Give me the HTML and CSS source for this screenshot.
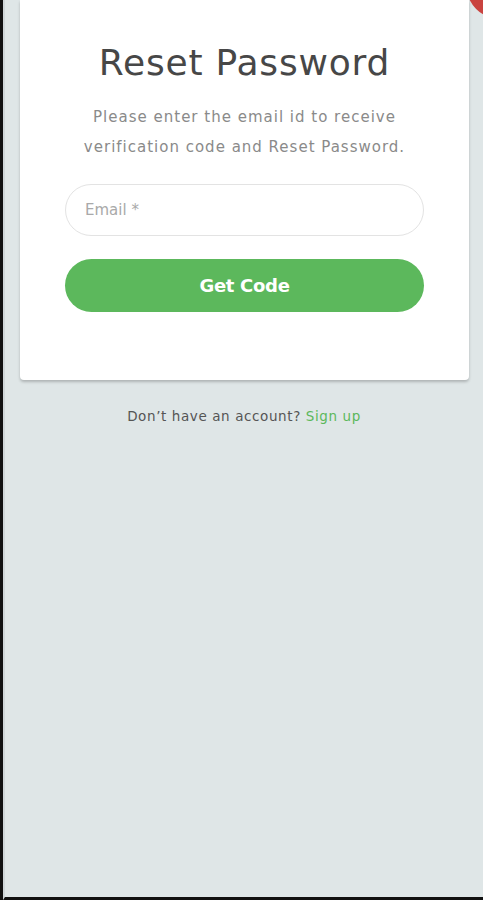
FILE: index.html
```html
<!DOCTYPE html>
<html>
<head>
<meta charset="utf-8">
<link rel="stylesheet" href="styles.css">
</head>
<body>
<div class="frame">
  <div class="corner"></div>
  <div class="card">
    <h1 class="title">Reset Password</h1>
    <p class="desc">Please enter the email id to receive<br>verification code and Reset Password.</p>
    <div class="field">Email *</div>
    <button class="btn">Get Code</button>
  </div>
  <p class="signup">Don’t have an account? <span class="link">Sign up</span></p>
</div>
</body>
</html>
```
FILE: styles.css
```css
html, body {
  margin: 0;
  padding: 0;
  height: 100%;
  overflow: hidden;
}
body {
  background: #111;
  font-family: "DejaVu Sans", sans-serif;
}
.frame {
  position: relative;
  box-sizing: border-box;
  height: 900px;
  margin-left: 3px;
  border-left: 2px solid #cfd6d8;
  border-bottom: 3px solid #111;
  background: #dfe6e7;
  overflow: hidden;
}
.corner {
  position: absolute;
  right: -52px;
  top: -50px;
  width: 69px;
  height: 69px;
  border-radius: 50%;
  background: #c9433f;
}
.card {
  box-sizing: border-box;
  margin-left: 15px;
  width: 449px;
  background: #fff;
  border-radius: 0 0 4px 4px;
  box-shadow: 0 2px 3px rgba(0,0,0,0.22);
  padding: 40px 45px 68px;
  display: flex;
  flex-direction: column;
  align-items: stretch;
}
.title {
  margin: 0;
  font-weight: 400;
  font-size: 36px;
  line-height: 46px;
  color: #474747;
  text-align: center;
  letter-spacing: 0.8px;
}
.desc {
  margin: 16px 0 0;
  font-size: 15px;
  line-height: 30px;
  color: #8a8a8a;
  text-align: center;
  letter-spacing: 1px;
}
.field {
  margin-top: 22px;
  height: 52px;
  box-sizing: border-box;
  border: 1px solid #e3e3e3;
  border-radius: 26px;
  padding-left: 19px;
  display: flex;
  align-items: center;
  font-size: 15px;
  color: #a9a9a9;
}
.btn {
  margin-top: 23px;
  height: 53px;
  border: 0;
  border-radius: 27px;
  background: #5cb85c;
  color: #fff;
  font-family: "DejaVu Sans", sans-serif;
  font-weight: bold;
  font-size: 18px;
  letter-spacing: -0.3px;
}
.signup {
  margin: 28px 0 0;
  text-align: center;
  font-size: 13.5px;
  color: #555;
  letter-spacing: 0.6px;
}
.link {
  color: #5cb85c;
}
```
